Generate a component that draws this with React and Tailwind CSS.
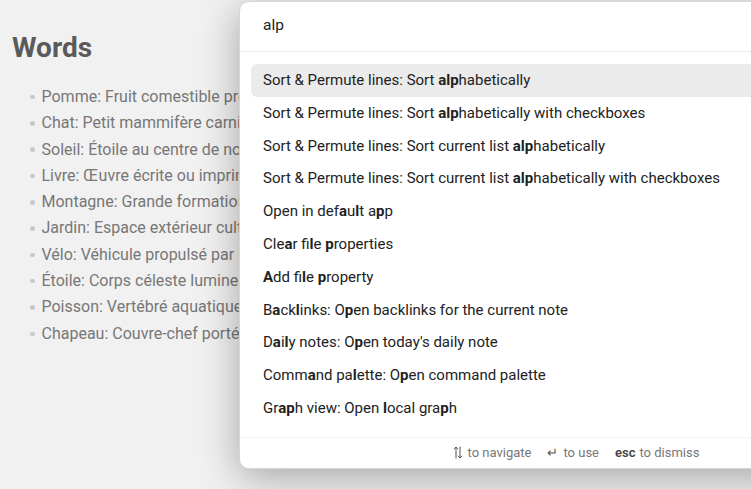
import { Fragment } from "react";

const words = [
  "Pomme: Fruit comestible produit par le pommier",
  "Chat: Petit mammifère carnivore domestique",
  "Soleil: Étoile au centre de notre système solaire",
  "Livre: Œuvre écrite ou imprimée",
  "Montagne: Grande formation rocheuse",
  "Jardin: Espace extérieur cultivé",
  "Vélo: Véhicule propulsé par les pédales",
  "Étoile: Corps céleste lumineux",
  "Poisson: Vertébré aquatique",
  "Chapeau: Couvre-chef porté sur la tête",
];

// each command is split in parts; odd parts are the matched letters
const commands = [
  ["Sort & Permute lines: Sort ", "alp", "habetically"],
  ["Sort & Permute lines: Sort ", "alp", "habetically with checkboxes"],
  ["Sort & Permute lines: Sort current list ", "alp", "habetically"],
  ["Sort & Permute lines: Sort current list ", "alp", "habetically with checkboxes"],
  ["Open in def", "a", "u", "l", "t a", "p", "p"],
  ["Cle", "a", "r fi", "l", "e ", "p", "roperties"],
  ["", "A", "dd fi", "l", "e ", "p", "roperty"],
  ["B", "a", "ck", "l", "inks: O", "p", "en backlinks for the current note"],
  ["D", "a", "i", "l", "y notes: O", "p", "en today's daily note"],
  ["Comm", "a", "nd pa", "l", "ette: O", "p", "en command palette"],
  ["Gr", "a", "", "p", "h view: Open ", "l", "ocal gra", "p", "h"],
];

function Highlighted({ parts }) {
  return parts.map((p, i) =>
    i % 2 === 1 ? (
      <span key={i} className="font-bold">{p}</span>
    ) : (
      <Fragment key={i}>{p}</Fragment>
    )
  );
}

function UpDown() {
  return (
    <svg width="10" height="13" viewBox="0 0 10 13" fill="none" stroke="#555" strokeWidth="1" className="mr-[5px]">
      <path d="M3 12.5V1M1 3.2L3 1l2 2.2" />
      <path d="M7 0.5V12M5 9.8L7 12l2-2.2" />
    </svg>
  );
}

export default function App() {
  return (
    <div
      className="relative w-[751px] h-[489px] overflow-hidden bg-[#f1f1f1] text-[#222]"
      style={{ fontFamily: "Roboto, 'Liberation Sans', sans-serif" }}
    >
      {/* note behind the palette */}
      <div className="pt-[31px] pl-[12px]">
        <h1 className="text-[28px] font-bold leading-[34px] text-[#5a5a5a]">Words</h1>
        <ul className="mt-[19px] pl-[18px] text-[16px] leading-[26.3px] text-[#777]">
          {words.map((w) => (
            <li key={w} className="flex items-center whitespace-nowrap">
              <span className="mr-[7px] h-[4.5px] w-[4.5px] shrink-0 rounded-full bg-[#c8c8c8]" />
              {w}
            </li>
          ))}
        </ul>
      </div>

      {/* command palette */}
      <div className="absolute left-[239px] top-[1px] flex w-[674px] flex-col rounded-[10px] border border-[#d6d6d6] bg-white shadow-[0_8px_40px_rgba(0,0,0,0.32)]">
        <div className="flex h-[50px] items-center border-b border-[#ececec] px-[23px] pb-[1px] text-[15.5px] text-[#222]">
          alp
        </div>
        <div className="px-[11px] py-[12px]">
          {commands.map((parts, i) => (
            <div
              key={i}
              className={`rounded-[6px] px-[12px] py-[8px] text-[15px] leading-[16.8px] whitespace-nowrap text-[#222] ${
                i === 0 ? "bg-[#ebebeb]" : ""
              }`}
            >
              <Highlighted parts={parts} />
            </div>
          ))}
        </div>
        <div className="flex h-[31px] items-center justify-center gap-[16px] border-t border-[#f3f3f3] text-[13px] text-[#777]">
          <span className="flex items-center">
            <UpDown />
            to navigate
          </span>
          <span className="flex items-center">
            <span className="mr-[5px] text-[#555]">↵</span>to use
          </span>
          <span className="flex items-center">
            <span className="mr-[4px] font-semibold text-[#444]">esc</span>to dismiss
          </span>
        </div>
      </div>
    </div>
  );
}
